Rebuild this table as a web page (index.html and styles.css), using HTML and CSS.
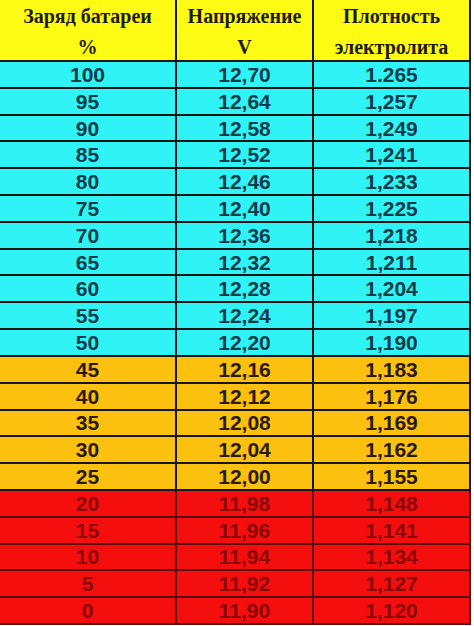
FILE: index.html
```html
<!DOCTYPE html>
<html lang="ru">
<head>
<meta charset="utf-8">
<title>Заряд батареи</title>
<link rel="stylesheet" href="styles.css">
</head>
<body>
<div class="sheet">
  <div class="row head">
    <div class="cell"><span>Заряд батареи</span><span>%</span></div>
    <div class="cell"><span>Напряжение</span><span>V</span></div>
    <div class="cell"><span>Плотность</span><span>электролита</span></div>
  </div>
  <div class="row cyan"><div class="cell">100</div><div class="cell">12,70</div><div class="cell">1.265</div></div>
  <div class="row cyan"><div class="cell">95</div><div class="cell">12,64</div><div class="cell">1,257</div></div>
  <div class="row cyan"><div class="cell">90</div><div class="cell">12,58</div><div class="cell">1,249</div></div>
  <div class="row cyan"><div class="cell">85</div><div class="cell">12,52</div><div class="cell">1,241</div></div>
  <div class="row cyan"><div class="cell">80</div><div class="cell">12,46</div><div class="cell">1,233</div></div>
  <div class="row cyan"><div class="cell">75</div><div class="cell">12,40</div><div class="cell">1,225</div></div>
  <div class="row cyan"><div class="cell">70</div><div class="cell">12,36</div><div class="cell">1,218</div></div>
  <div class="row cyan"><div class="cell">65</div><div class="cell">12,32</div><div class="cell">1,211</div></div>
  <div class="row cyan"><div class="cell">60</div><div class="cell">12,28</div><div class="cell">1,204</div></div>
  <div class="row cyan"><div class="cell">55</div><div class="cell">12,24</div><div class="cell">1,197</div></div>
  <div class="row cyan"><div class="cell">50</div><div class="cell">12,20</div><div class="cell">1,190</div></div>
  <div class="row orange"><div class="cell">45</div><div class="cell">12,16</div><div class="cell">1,183</div></div>
  <div class="row orange"><div class="cell">40</div><div class="cell">12,12</div><div class="cell">1,176</div></div>
  <div class="row orange"><div class="cell">35</div><div class="cell">12,08</div><div class="cell">1,169</div></div>
  <div class="row orange"><div class="cell">30</div><div class="cell">12,04</div><div class="cell">1,162</div></div>
  <div class="row orange"><div class="cell">25</div><div class="cell">12,00</div><div class="cell">1,155</div></div>
  <div class="row red"><div class="cell">20</div><div class="cell">11,98</div><div class="cell">1,148</div></div>
  <div class="row red"><div class="cell">15</div><div class="cell">11,96</div><div class="cell">1,141</div></div>
  <div class="row red"><div class="cell">10</div><div class="cell">11,94</div><div class="cell">1,134</div></div>
  <div class="row red"><div class="cell">5</div><div class="cell">11,92</div><div class="cell">1,127</div></div>
  <div class="row red"><div class="cell">0</div><div class="cell">11,90</div><div class="cell">1,120</div></div>
</div>
</body>
</html>
```

FILE: styles.css
```css
html, body {
  margin: 0;
  padding: 0;
  background: #ffffff;
}

.sheet {
  display: grid;
  grid-template-columns: 177px 137px 157px;
  grid-template-rows: 62px repeat(21, 1fr);
  width: 471px;
  height: 625px;
}

.row {
  display: contents;
}

.cell {
  box-sizing: border-box;
  border-right: 2px solid #151515;
  border-bottom: 2px solid #151515;
  display: flex;
  align-items: center;
  justify-content: center;
  font-family: "Liberation Sans", Arial, sans-serif;
  font-weight: bold;
  font-size: 21px;
  line-height: 1;
}

.head .cell {
  flex-direction: column;
  justify-content: flex-start;
  background: #fdfb14;
  color: #1e1a06;
  font-family: "Liberation Serif", "Times New Roman", serif;
  font-size: 20px;
  line-height: 31px;
  padding-top: 1px;
}

.cyan .cell {
  background: #30f3f5;
  color: #0f3b4a;
}

.orange .cell {
  background: #fcc10e;
  color: #2a1a08;
}

.red .cell {
  background: #f50e0e;
  color: #8a0808;
  border-color: #5a0a0a;
}
```
